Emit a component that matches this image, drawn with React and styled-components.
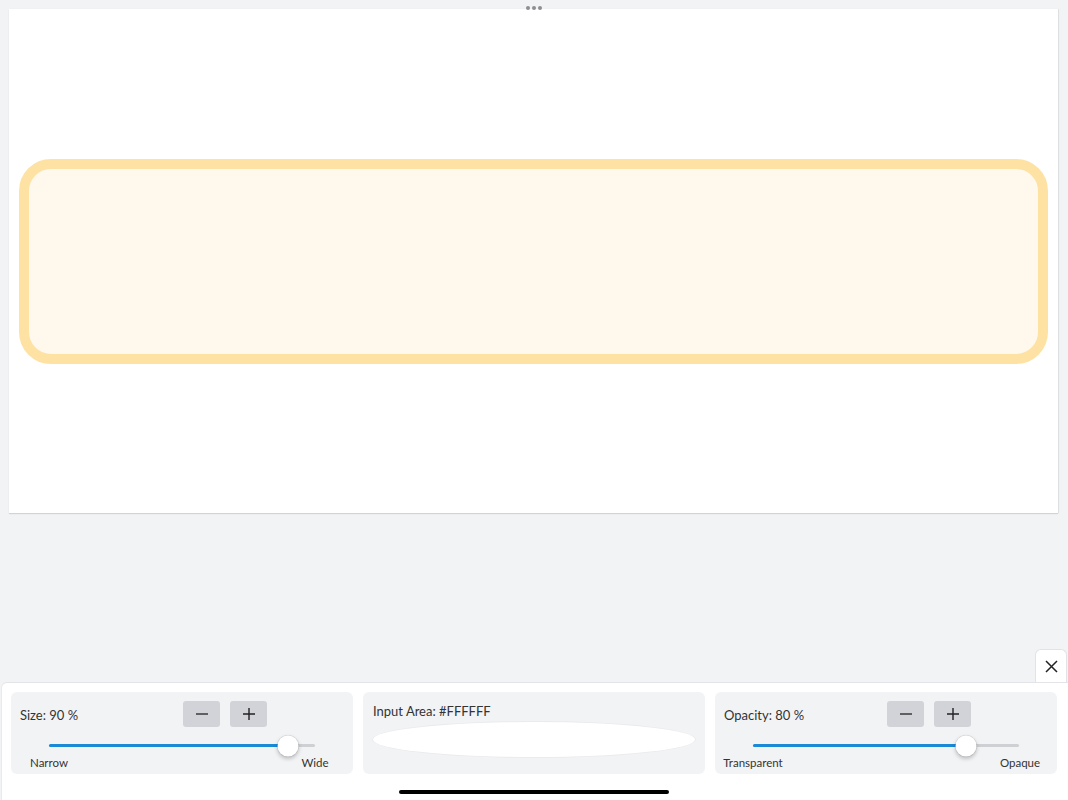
import React from "react";
import styled, { createGlobalStyle } from "styled-components";

const GlobalStyle = createGlobalStyle`
  html, body {
    margin: 0;
    padding: 0;
    background: #f2f3f5;
  }
  body {
    font-family: "Lato", "Open Sans", sans-serif;
    color: #333;
  }
`;

const Page = styled.div`
  height: 800px;
  display: flex;
  flex-direction: column;
  overflow: hidden;
`;

const Canvas = styled.div`
  position: relative;
  margin: 9px 10px 0 9px;
  height: 504px;
  background: #fff;
  box-shadow: 0 1px 1px rgba(0, 0, 0, 0.12), 1px 0 1px rgba(0, 0, 0, 0.06);
  display: flex;
  align-items: center;
  padding: 0 10px;
`;

const Grabber = styled.div`
  position: absolute;
  top: -3px;
  left: 50%;
  transform: translateX(-50%);
  display: flex;
  gap: 2px;
  span {
    width: 4px;
    height: 4px;
    border-radius: 50%;
    background: #8e8e93;
  }
`;

const Field = styled.div`
  flex: 1;
  height: 185px;
  border: 10px solid #fee2a4;
  border-radius: 32px;
  background: #fef9ec;
`;

const Spacer = styled.div`
  flex: 1;
`;

const CloseRow = styled.div`
  display: flex;
  justify-content: flex-end;
  padding-right: 1px;
`;

const CloseButton = styled.button`
  width: 32px;
  height: 33px;
  padding: 0;
  border: 1px solid #e2e3e6;
  border-bottom: none;
  border-radius: 6px 6px 0 0;
  background: #fff;
  display: flex;
  align-items: center;
  justify-content: center;
  cursor: pointer;
`;

const Panel = styled.div`
  margin-left: 1px;
  height: 118px;
  box-sizing: border-box;
  background: #fff;
  border-top: 1px solid #e3e4e7;
  border-left: 1px solid #e9eaed;
  border-radius: 6px 0 0 0;
  padding: 9px 11px 0 9px;
  display: flex;
  flex-direction: column;
  align-items: center;
`;

const Cards = styled.div`
  align-self: stretch;
  display: grid;
  grid-template-columns: repeat(3, 1fr);
  gap: 10px;
`;

const Card = styled.div`
  height: 82px;
  box-sizing: border-box;
  background: #f2f3f5;
  border-radius: 6px;
  padding: ${(p) => p.$pad || "9px 9px 0"};
`;

const TopRow = styled.div`
  display: grid;
  grid-template-columns: 1fr 1fr;
  align-items: center;
  height: 26px;
`;

const Label = styled.div`
  font-size: 13px;
  color: #333;
  white-space: nowrap;
  padding-top: ${(p) => p.$top || "0"};
`;

const Steppers = styled.div`
  display: flex;
  gap: 10px;
  padding-left: 1px;
`;

const StepButton = styled.button`
  width: 37px;
  height: 26px;
  padding: 0;
  border: none;
  border-radius: 3px;
  background: #d1d3d9;
  display: flex;
  align-items: center;
  justify-content: center;
`;

const Slider = styled.div`
  position: relative;
  margin: 17px ${(p) => p.$side}px 0;
  height: 3px;
  border-radius: 2px;
  background: #cfd0d3;
`;

const Fill = styled.div`
  height: 100%;
  border-radius: 2px;
  background: #1a89d6;
`;

const Thumb = styled.div`
  position: absolute;
  top: 50%;
  width: 21px;
  height: 21px;
  border-radius: 50%;
  background: #fff;
  box-shadow: 0 0 0 0.5px rgba(0, 0, 0, 0.1), 0 2px 4px rgba(0, 0, 0, 0.25);
  transform: translate(-50%, -50%);
`;

const Ends = styled.div`
  display: flex;
  justify-content: space-between;
  margin: 9px ${(p) => p.$side}px 0;
`;

const End = styled.div`
  width: 0;
  display: flex;
  justify-content: center;
  transform: translateX(${(p) => p.$shift || 0}px);
  span {
    font-size: 11.5px;
    color: #333;
    white-space: nowrap;
  }
`;

const Oval = styled.div`
  margin-top: 3px;
  height: 35px;
  border-radius: 50%;
  background: #fff;
  box-shadow: 0 0 0 1px #ebebee;
`;

const HomeBar = styled.div`
  margin-top: 16px;
  width: 270px;
  height: 4px;
  border-radius: 2px;
  background: #000;
`;

const Minus = () => (
  <svg width="14" height="14" viewBox="0 0 14 14">
    <path d="M1 7h12" stroke="#444" strokeWidth="1.6" />
  </svg>
);

const Plus = () => (
  <svg width="14" height="14" viewBox="0 0 14 14">
    <path d="M1 7h12M7 1v12" stroke="#222" strokeWidth="1.4" />
  </svg>
);

const SliderCard = ({ label, value, low, high, lowShift, highShift }) => (
  <Card>
    <TopRow>
      <Label $top="2px">
        {label}: {value} %
      </Label>
      <Steppers>
        <StepButton>
          <Minus />
        </StepButton>
        <StepButton>
          <Plus />
        </StepButton>
      </Steppers>
    </TopRow>
    <Slider $side={29}>
      <Fill style={{ width: `${value}%` }} />
      <Thumb style={{ left: `${value}%` }} />
    </Slider>
    <Ends $side={29}>
      <End $shift={lowShift}>
        <span>{low}</span>
      </End>
      <End $shift={highShift}>
        <span>{high}</span>
      </End>
    </Ends>
  </Card>
);

const App = () => {
  return (
    <>
      <GlobalStyle />
      <Page>
        <Canvas>
          <Grabber>
            <span />
            <span />
            <span />
          </Grabber>
          <Field />
        </Canvas>
        <Spacer />
        <CloseRow>
          <CloseButton aria-label="Close">
            <svg width="13" height="13" viewBox="0 0 13 13">
              <path d="M1 1l11 11M12 1L1 12" stroke="#222" strokeWidth="1.5" />
            </svg>
          </CloseButton>
        </CloseRow>
        <Panel>
          <Cards>
            <SliderCard label="Size" value={90} low="Narrow" high="Wide" highShift={0} />
            <Card $pad="11px 10px 0">
              <Label>Input Area: #FFFFFF</Label>
              <Oval />
            </Card>
            <SliderCard
              label="Opacity"
              value={80}
              low="Transparent"
              high="Opaque"
              lowShift={0}
              highShift={1}
            />
          </Cards>
          <HomeBar />
        </Panel>
      </Page>
    </>
  );
};

export default App;
